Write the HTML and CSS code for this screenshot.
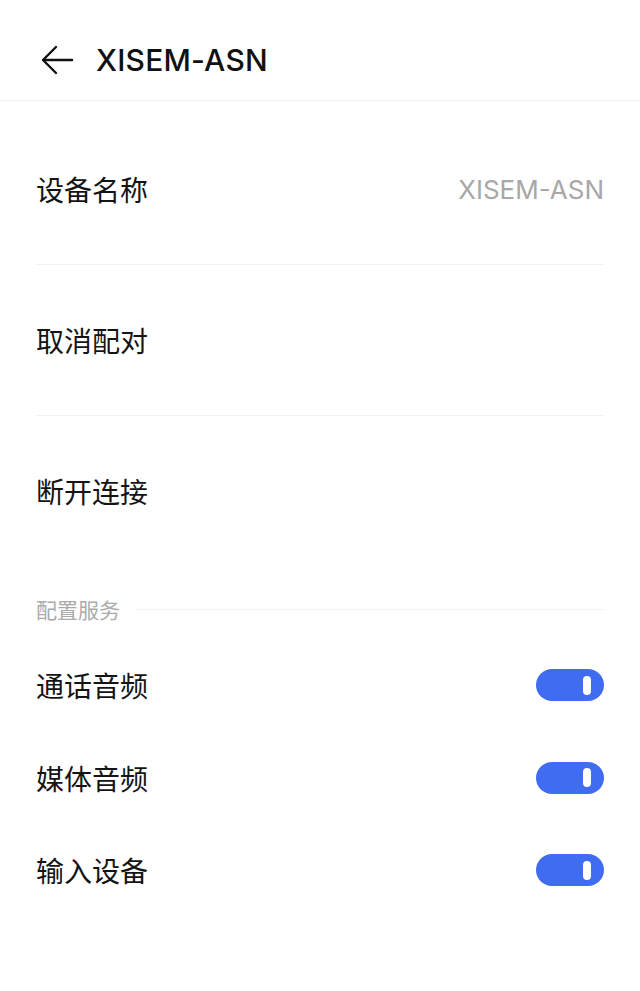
FILE: index.html
```html
<!DOCTYPE html>
<html lang="zh-CN">
<head>
    <meta charset="UTF-8">
    <meta name="viewport" content="width=device-width, initial-scale=1.0">
    <title>XISEM-ASN</title>
    <link rel="stylesheet" href="styles.css">
</head>
<body>
    <header class="topbar">
        <svg class="back" width="34" height="30" viewBox="0 0 34 30">
            <path d="M32 15 H3 M16 2 L3 15 L16 28" fill="none" stroke="#111" stroke-width="2.4" stroke-linecap="round" stroke-linejoin="round"/>
        </svg>
        <h1>XISEM-ASN</h1>
    </header>

    <div class="list">
        <div class="row">
            <span class="label">设备名称</span>
            <span class="value">XISEM-ASN</span>
        </div>
        <div class="row">
            <span class="label">取消配对</span>
        </div>
        <div class="row last">
            <span class="label">断开连接</span>
        </div>
    </div>

    <div class="section">
        <span>配置服务</span>
        <div class="section-line"></div>
    </div>

    <div class="toggles">
        <div class="toggle-row">
            <span class="label">通话音频</span>
            <div class="switch"><div class="knob"></div></div>
        </div>
        <div class="toggle-row">
            <span class="label">媒体音频</span>
            <div class="switch"><div class="knob"></div></div>
        </div>
        <div class="toggle-row">
            <span class="label">输入设备</span>
            <div class="switch"><div class="knob"></div></div>
        </div>
    </div>
</body>
</html>
```

FILE: styles.css
```css
body {
    margin: 0;
    background-color: #FFFFFF;
    color: #111111;
    font-family: "Inter", "Noto Sans CJK SC", sans-serif;
}
.topbar {
    height: 80px;
    padding: 20px 0 0 40px;
    display: flex;
    align-items: center;
    border-bottom: 1px solid #F2F2F2;
}
.back {
    display: block;
    margin-right: 22px;
}
.topbar h1 {
    margin: 0;
    font-size: 30px;
    font-weight: 500;
    letter-spacing: 0.2px;
}
.list {
    margin-top: 13px;
    padding: 0 36px;
}
.row {
    height: 150px;
    display: flex;
    align-items: center;
    justify-content: space-between;
    border-bottom: 1px solid #F1F1F1;
}
.row.last {
    border-bottom: none;
}
.label {
    font-family: "Noto Sans CJK SC", sans-serif;
    font-size: 28px;
    color: #141414;
}
.value {
    font-size: 26px;
    color: #A8A8A8;
}
.section {
    display: flex;
    align-items: center;
    padding: 28px 36px 15px;
    color: #ABABAB;
    font-family: "Noto Sans CJK SC", sans-serif;
    font-size: 21px;
}
.section-line {
    flex: 1;
    height: 1px;
    background-color: #F2F2F2;
    margin-left: 17px;
}
.toggles {
    padding: 0 36px;
}
.toggle-row {
    height: 92.5px;
    display: flex;
    align-items: center;
    justify-content: space-between;
}
.switch {
    width: 68px;
    height: 32px;
    border-radius: 16px;
    background-color: #3F6CF0;
    display: flex;
    align-items: center;
    justify-content: flex-end;
    padding-right: 13px;
    box-sizing: border-box;
}
.knob {
    width: 8px;
    height: 19px;
    border-radius: 4px;
    background-color: #FFFFFF;
}
```
